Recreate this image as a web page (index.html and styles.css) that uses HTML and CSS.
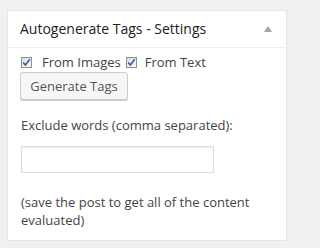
FILE: index.html
```html
<!DOCTYPE html>
<html>
<head>
<meta charset="utf-8">
<link rel="stylesheet" href="styles.css">
</head>
<body>
<div class="postbox">
  <div class="hndle">
    <h3 class="title">Autogenerate Tags - Settings</h3>
    <span class="toggle"></span>
  </div>
  <div class="inside">
    <div class="checks">
      <span class="cb"><svg width="9" height="9" viewBox="0 0 9 9"><path d="M1.2 4.6 L3.4 7 L7.8 1.2" fill="none" stroke="#3c5eb0" stroke-width="1.6"/></svg></span>
      <span class="lbl">From Images</span>
      <span class="cb cb-second"><svg width="9" height="9" viewBox="0 0 9 9"><path d="M1.2 4.6 L3.4 7 L7.8 1.2" fill="none" stroke="#3c5eb0" stroke-width="1.6"/></svg></span>
      <span class="lbl">From Text</span>
    </div>
    <button class="button">Generate Tags</button>
    <p class="label">Exclude words (comma separated):</p>
    <div class="input"></div>
    <p class="note">(save the post to get all of the content evaluated)</p>
  </div>
</div>
</body>
</html>
```
FILE: styles.css
```css
html, body {
  margin: 0;
  padding: 0;
}
body {
  background: #f1f1f1;
  font-family: "Open Sans", sans-serif;
  font-size: 13px;
  color: #444;
  padding: 10px 3px 0 7px;
}
.postbox {
  width: 278px;
  height: 229px;
  background: #fff;
  border: 1px solid #e5e5e5;
  box-shadow: 0 1px 1px rgba(0,0,0,0.04);
}
.hndle {
  display: flex;
  align-items: center;
  justify-content: space-between;
  height: 36px;
  border-bottom: 1px solid #eee;
  padding: 0 14px 0 12px;
}
.title {
  margin: 0;
  font-size: 14px;
  font-weight: 400;
  color: #222;
  line-height: 20px;
}
.toggle {
  width: 0;
  height: 0;
  border-left: 4px solid transparent;
  border-right: 4px solid transparent;
  border-bottom: 6px solid #a0a5aa;
  margin-top: -1px;
}
.inside {
  padding: 7px 12px 0 13px;
}
.checks {
  display: flex;
  align-items: center;
  height: 14px;
  line-height: 14px;
}
.cb {
  width: 9px;
  height: 9px;
  border: 1px solid #8f8f8f;
  background: linear-gradient(135deg, #dcdcdc, #fafafa);
  display: inline-flex;
  align-items: center;
  justify-content: center;
  margin-right: 10px;
}
.cb-second {
  margin-right: 8px;
}
.lbl {
  margin-right: 5px;
}
.button {
  display: block;
  box-sizing: border-box;
  margin: 3px 0 0 -1px;
  width: 108px;
  height: 28px;
  border: 1px solid #ccc;
  border-radius: 3px;
  background: #f7f7f7;
  box-shadow: 0 1px 0 #ccc;
  font-family: "Open Sans", sans-serif;
  font-size: 13px;
  color: #555;
  padding: 0 0 1px;
  white-space: nowrap;
  text-align: center;
}
.label {
  margin: 16px 0 0;
  line-height: 18px;
}
.input {
  margin-top: 12px;
  width: 191px;
  height: 25px;
  border: 1px solid #ddd;
  box-shadow: inset 0 1px 2px rgba(0,0,0,0.07);
}
.note {
  margin: 20px 0 0;
  line-height: 18px;
}
```
